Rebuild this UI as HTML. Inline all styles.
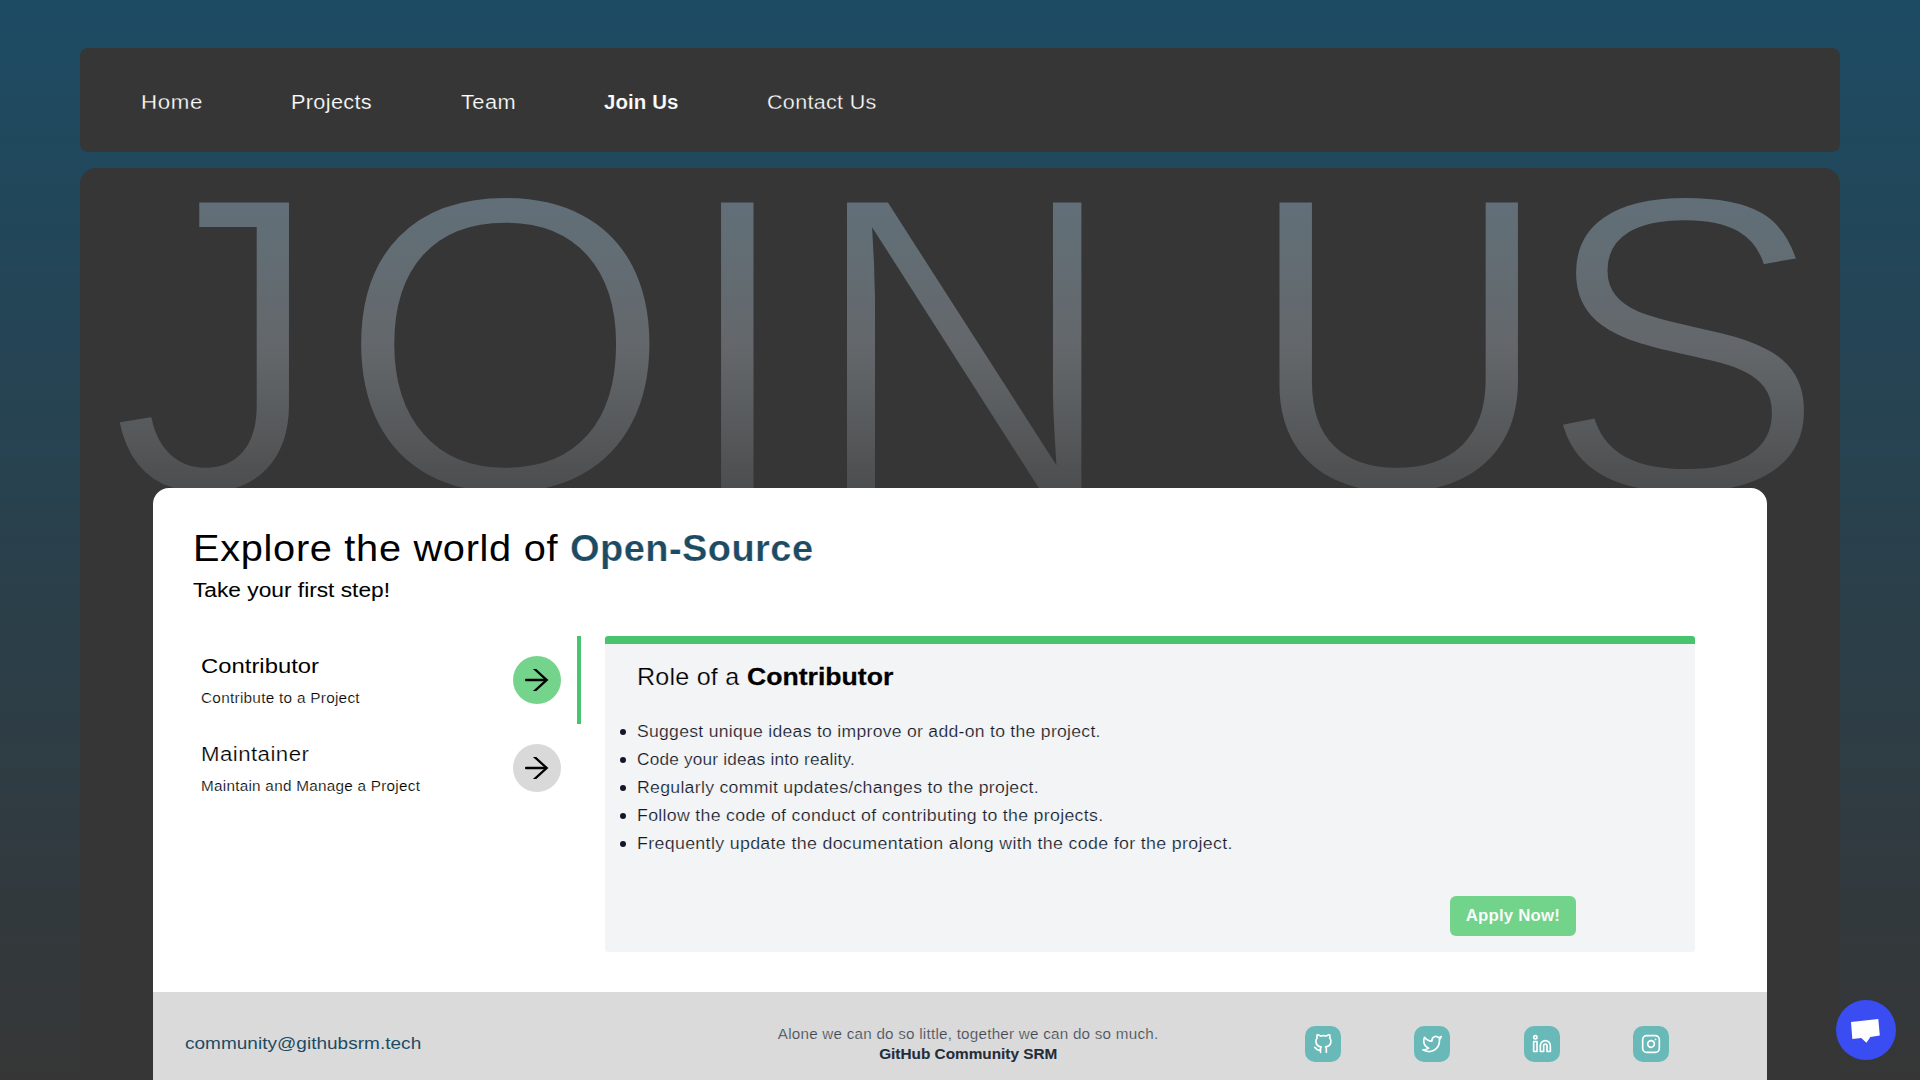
<!DOCTYPE html>
<html lang="en"><head><meta charset="utf-8">
<title>Join Us | GitHub Community SRM</title>
<style>
*{box-sizing:border-box}
html,body{margin:0;padding:0}
body{width:1920px;height:1080px;overflow:hidden;position:relative;background:linear-gradient(180deg,#1d4b63 0%,#363636 100%);font-family:"Liberation Sans",sans-serif;color:#000}
.nav{--bgc:#363636;position:absolute;left:80px;top:48px;width:1760px;height:104px;background:#363636;border-radius:8px}
.nav a{position:absolute;top:38px;font-size:20px;line-height:32px;color:#fff;white-space:nowrap;text-decoration:none}
.main{position:absolute;left:80px;top:168px;width:1760px;height:940px;background:#363636;border-radius:16px;overflow:hidden}
.bigsvg{position:absolute;left:0;top:0}
.card{position:absolute;left:153px;top:488px;width:1614px;height:620px;background:#fff;border-radius:16px;overflow:hidden}
.h1{position:absolute;top:39px;font-size:36px;line-height:44px}
.h1b{color:#1d4b63;font-weight:700}
.hw{margin:0;font:inherit}
.h2{margin:0;position:absolute;left:40px;top:88px;font-size:20px;line-height:28px}
.item{position:absolute;left:40px;width:388px;height:88px}
.item .t{position:absolute;left:8px;top:16px;font-size:20px;line-height:28px}
.item .s{position:absolute;left:8px;top:50px;font-size:14px;line-height:24px}
.item .c{position:absolute;left:320px;top:20px;width:48px;height:48px;border-radius:50%}
.item .c svg{position:absolute;left:0;top:0}
.bar{position:absolute;left:424px;top:148px;width:4px;height:88px;background:#47c46d}
.panel{--bgc:#f3f4f6;position:absolute;left:452px;top:148px;width:1090px;height:316px;background:#f3f4f6;border-top:8px solid #47c46d;border-radius:3px}
.panel .pt{position:absolute;top:17px;font-size:24px;line-height:32px}
.panel ul{position:absolute;left:32px;top:74px;margin:0;padding:0;list-style:none;font-size:16px;line-height:28px;color:#111827}
.panel li{white-space:nowrap;position:relative;height:28px}
.panel li:before{content:"";position:absolute;left:-17.5px;top:10.5px;width:6px;height:6px;border-radius:50%;background:#111827}
.btn{--bgc:#72d38a;border:0;padding:0;margin:0;font-family:inherit;cursor:pointer;position:absolute;left:845px;top:252px;width:126px;height:40px;border-radius:6px;background:#72d38a;color:#fff;font-weight:700;font-size:16px;line-height:40px;text-align:center}
.foot{--bgc:#dadada;position:absolute;left:0;top:504px;width:1614px;height:120px;background:#dadada}
.mail{position:absolute;left:32px;top:40px;font-size:16px;line-height:24px;color:#1d4b63;text-decoration:none}
.quote{position:absolute;left:515px;width:600px;top:32px;text-align:center;font-size:14px;line-height:20px;color:#3e4652}
.quote b{color:#232d3a;font-weight:700}
.soc{position:absolute;top:34px;width:36px;height:36px;border-radius:10px;background:#69b9b9}
.soc svg{position:absolute;left:8px;top:8px;width:20px;height:20px;fill:none;stroke:#fff;stroke-width:2;stroke-linecap:round;stroke-linejoin:round}
.chat{position:absolute;left:1836px;top:1000px;width:60px;height:60px;border-radius:50%;background:#3a4df3}
.x{display:inline-block;white-space:pre;transform-origin:0 50%;transform:scaleX(var(--k,1));letter-spacing:var(--ls,0);-webkit-text-stroke:var(--ts,0) var(--tc,var(--bgc,#fff))}
.xc{transform-origin:50% 50%}
</style></head><body>
<nav class="nav">
<a href="#" id="n1" class="x" style="left:60.5px;--k:1.1148;--ls:0.5887px;--ts:0.2502px">Home</a>
<a href="#" id="n2" class="x" style="left:210.5px;--k:1.0846;--ls:0.302px;--ts:0.2137px">Projects</a>
<a href="#" id="n3" class="x" style="left:380.5px;--k:1.0899;--ls:0.4322px;--ts:0.2255px">Team</a>
<a href="#" id="n4" class="x" style="left:523.5px;font-weight:700;--k:1.0221;--ls:0.0957px;--ts:0.1534px">Join Us</a>
<a href="#" id="n5" class="x" style="left:686.5px;--k:1.0758;--ls:0.2989px;--ts:0.2847px">Contact Us</a>
</nav>
<main class="main">
<svg class="bigsvg" width="1760" height="320" viewBox="80 168 1760 320"><defs><linearGradient id="jg" gradientUnits="userSpaceOnUse" x1="0" y1="-295.0" x2="0" y2="-4.1"><stop offset="0.000" stop-color="#616f78"/><stop offset="0.168" stop-color="#626d74"/><stop offset="0.343" stop-color="#636a6f"/><stop offset="0.510" stop-color="#63676b"/><stop offset="0.664" stop-color="#5c6062"/><stop offset="0.832" stop-color="#555759"/><stop offset="0.930" stop-color="#505153"/><stop offset="1.000" stop-color="#4d4e4f"/></linearGradient></defs><text transform="translate(0,492.0) scale(1,0.9829)" x="108.2 336.6 677.0 807.4 907.4 1242.0 1538.4" y="0" font-family="Liberation Sans, sans-serif" font-size="434" fill="url(#jg)" stroke="#363636" stroke-width="8" stroke-linejoin="miter" stroke-miterlimit="30" >JOIN US</text></svg>
</main>
<div class="card">
<h1 class="hw"><span class="h1 x" id="h1a" style="left:40px;--k:1.104;--ls:0.631px;--ts:0.0092px">Explore the world of </span>
<span class="h1 h1b x" id="h1b" style="left:416.94px;--k:1.0542;--ls:0.4527px;--ts:0.2321px">Open-Source</span></h1>
 <p class="h2 x" id="h2" style="--k:1.1361;--ls:0px;--ts:0.0788px;--tc:currentColor">Take your first step!</p>
 <div class="item" style="top:148px"><div class="t x" id="c1" style="--k:1.1903;--ls:0.024px;--ts:0px">Contributor</div><div class="s x" id="c2" style="--k:1.0985;--ls:0.2328px;--ts:0.1955px">Contribute to a Project</div><div class="c" style="background:#74d48b"><svg viewBox="0 0 48 48" width="48" height="48"><rect x="12" y="22.8" width="22" height="2.4" rx="1" fill="#000"/><polygon points="19.9,13 23.3,13 35.4,24 23.3,35 19.9,35 32,24" fill="#000"/></svg></div></div>
 <div class="item" style="top:236px"><div class="t x" id="m1" style="--k:1.112;--ls:0.403px;--ts:0.2372px">Maintainer</div><div class="s x" id="m2" style="--k:1.0916;--ls:0.2403px;--ts:0.1821px">Maintain and Manage a Project</div><div class="c" style="background:#d9d9d9"><svg viewBox="0 0 48 48" width="48" height="48"><rect x="12" y="22.8" width="22" height="2.4" rx="1" fill="#000"/><polygon points="19.9,13 23.3,13 35.4,24 23.3,35 19.9,35 32,24" fill="#000"/></svg></div></div>
 <div class="bar"></div>
 <div class="panel">
  <h2 class="hw"><span class="pt x" id="pta" style="left:32px;--k:1.0465;--ls:0.1957px;--ts:0.2411px">Role of a </span>
<span class="pt x" id="ptb" style="left:141.56px;font-weight:700;--k:1.1087;--ls:0px;--ts:0.2629px;--tc:currentColor">Contributor</span></h2>
  <ul>
   <li><span class="x" id="l1" style="--k:1.0969;--ls:0.2706px;--ts:0.1966px">Suggest unique ideas to improve or add-on to the project.</span></li>
   <li><span class="x" id="l2" style="--k:1.0744;--ls:0.2017px;--ts:0.1918px">Code your ideas into reality.</span></li>
   <li><span class="x" id="l3" style="--k:1.1011;--ls:0.288px;--ts:0.2px">Regularly commit updates/changes to the project.</span></li>
   <li><span class="x" id="l4" style="--k:1.1067;--ls:0.2834px;--ts:0.2px">Follow the code of conduct of contributing to the projects.</span></li>
   <li><span class="x" id="l5" style="--k:1.1112;--ls:0.3062px;--ts:0.2034px">Frequently update the documentation along with the code for the project.</span></li>
  </ul>
  <button class="btn" type="button"><span class="x xc" id="btn" style="--k:1.0511;--ls:0.1833px;--ts:0.0977px">Apply Now!</span></button>
 </div>
 <footer class="foot">
  <a href="#" class="mail x" id="mail" style="--k:1.1858;--ls:0.0279px;--ts:0px">community@githubsrm.tech</a>
  <div class="quote"><span class="x xc" id="q1" style="--k:1.0871;--ls:0.2152px;--ts:0.2292px">Alone we can do so little, together we can do so much.</span><br><b class="x xc" id="q2" style="--k:1.0967;--ls:0px;--ts:0.0891px;--tc:currentColor">GitHub Community SRM</b></div>
  <div class="soc" style="left:1152px"><svg viewBox="0 0 24 24"><path d="M9 19c-5 1.5-5-2.5-7-3m14 6v-3.870a3.370 3.370 0 0 0-.940-2.610c3.140-.350 6.440-1.540 6.440-7A5.440 5.440 0 0 0 20 4.770 5.070 5.070 0 0 0 19.910 1S18.730.650 16 2.480a13.380 13.380 0 0 0-7 0C6.270.650 5.090 1 5.090 1A5.070 5.070 0 0 0 5 4.770a5.440 5.440 0 0 0-1.500 3.780c0 5.420 3.300 6.610 6.440 7A3.370 3.370 0 0 0 9 18.130V22"/></svg></div>
  <div class="soc" style="left:1261px"><svg viewBox="0 0 24 24"><path d="M23 3a10.900 10.900 0 0 1-3.140 1.530 4.480 4.480 0 0 0-7.860 3v1A10.660 10.660 0 0 1 3 4s-4 9 5 13a11.640 11.640 0 0 1-7 2c9 5 20 0 20-11.500a4.500 4.500 0 0 0-.080-.830A7.720 7.720 0 0 0 23 3z"/></svg></div>
  <div class="soc" style="left:1371px"><svg viewBox="0 0 24 24"><path d="M16 8a6 6 0 0 1 6 6v7h-4v-7a2 2 0 0 0-2-2 2 2 0 0 0-2 2v7h-4v-7a6 6 0 0 1 6-6z"/><rect x="2" y="9" width="4" height="12"/><circle cx="4" cy="4" r="2"/></svg></div>
  <div class="soc" style="left:1480px"><svg viewBox="0 0 24 24"><rect x="2" y="2" width="20" height="20" rx="5" ry="5"/><path d="M16 11.370A4 4 0 1 1 12.630 8 4 4 0 0 1 16 11.370z"/><line x1="17.500" y1="6.500" x2="17.510" y2="6.500"/></svg></div>
 </footer>
</div>
<div class="chat"><svg viewBox="0 0 60 60" width="60" height="60"><polygon points="15,22.1 42.3,19 43.8,35.4 34.4,37.1 30.4,42.75 25.25,38.1 16.3,39" fill="#fff"/></svg></div>
</body></html>
